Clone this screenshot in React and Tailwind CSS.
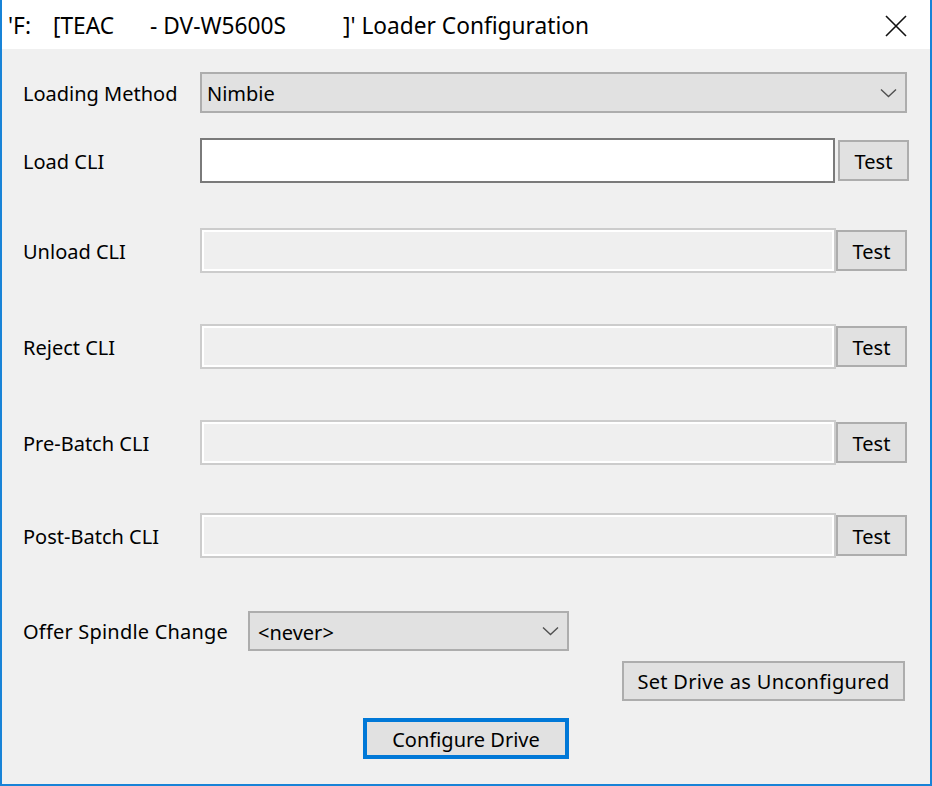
import React from 'react';

const font = "font-['Noto_Sans','Open_Sans',sans-serif]";

function Chevron() {
  return (
    <svg width="17" height="10" viewBox="0 0 17 10" className="shrink-0">
      <polyline points="1,1.5 8.5,8.5 16,1.5" fill="none" stroke="#505050" strokeWidth="1.4" />
    </svg>
  );
}

function Dropdown({ value, className }) {
  return (
    <div
      className={`flex items-center justify-between bg-[#e1e1e1] border-2 border-[#adadad] pl-[5px] pr-[8px] ${className}`}
    >
      <span className="text-[20px] text-black leading-none pt-[3px]">{value}</span>
      <Chevron />
    </div>
  );
}

function TestButton({ className = '' }) {
  return (
    <button
      className={`w-[71px] h-[41px] shrink-0 bg-[#e1e1e1] border-2 border-[#adadad] text-[20px] text-black leading-none pt-[2px] ${className}`}
    >
      Test
    </button>
  );
}

function CliRow({ label, className = '' }) {
  return (
    <div className={`flex items-center h-[45px] ${className}`}>
      <span className="w-[177px] shrink-0 text-[20px] text-black pt-[2px]">{label}</span>
      <div className="w-[636px] h-[45px] bg-[#efefef] border-2 border-[#cccccc] shadow-[inset_0_0_0_2px_#ffffff]" />
      <TestButton />
    </div>
  );
}

export default function App() {
  return (
    <div className={`w-[932px] h-[786px] flex flex-col bg-[#f0f0f0] border-x-2 border-b-2 border-[#1883d7] ${font}`}>
      {/* title bar: drive letter, vendor and model are padded fields */}
      <div className="h-[49px] shrink-0 bg-white flex items-center justify-between pl-[6px] pr-[23px]">
        <div className="flex text-[22.7px] text-black whitespace-pre leading-none pt-[4px]">
          <span className="w-[45px]">'F:</span>
          <span className="w-[97px]">[TEAC</span>
          <span className="w-[193px]">- DV-W5600S</span>
          <span>]' Loader Configuration</span>
        </div>
        <svg width="22" height="22" viewBox="0 0 22 22" className="mt-[2px]">
          <path d="M1 1 L21 21 M21 1 L1 21" stroke="#111" strokeWidth="1.6" />
        </svg>
      </div>

      <div className="flex flex-col pl-[21px] pt-[23px]">
        <div className="flex items-center h-[41px]">
          <span className="w-[177px] shrink-0 text-[20px] text-black pt-[2px]">Loading Method</span>
          <Dropdown value="Nimbie" className="w-[707px] h-[41px]" />
        </div>

        <div className="flex items-center h-[45px] mt-[25px]">
          <span className="w-[177px] shrink-0 text-[20px] text-black pt-[2px]">Load CLI</span>
          <div className="w-[635px] h-[45px] bg-white border-2 border-[#7a7a7a]" />
          <TestButton className="ml-[3px]" />
        </div>

        <CliRow label="Unload CLI" className="mt-[45px]" />
        <CliRow label="Reject CLI" className="mt-[51px]" />
        <CliRow label="Pre-Batch CLI" className="mt-[51px]" />
        <CliRow label="Post-Batch CLI" className="mt-[48px]" />

        <div className="flex items-center h-[40px] mt-[53px]">
          <span className="w-[225px] shrink-0 text-[20px] text-black pt-[2px] tracking-[0.2px]">Offer Spindle Change</span>
          <Dropdown value="<never>" className="w-[321px] h-[40px] pl-[8px]" />
        </div>
      </div>

      <div className="flex justify-end pr-[25px] mt-[10px]">
        <button className="w-[283px] h-[40px] bg-[#e1e1e1] border-2 border-[#adadad] text-[20px] text-black leading-none pt-[2px] tracking-[0.3px]">
          Set Drive as Unconfigured
        </button>
      </div>

      <div className="flex justify-center mt-[17px]">
        <button className="w-[206px] h-[41px] bg-[#e1e1e1] border-4 border-[#0078d7] text-[20px] text-black leading-none pt-[2px]">
          Configure Drive
        </button>
      </div>
    </div>
  );
}
